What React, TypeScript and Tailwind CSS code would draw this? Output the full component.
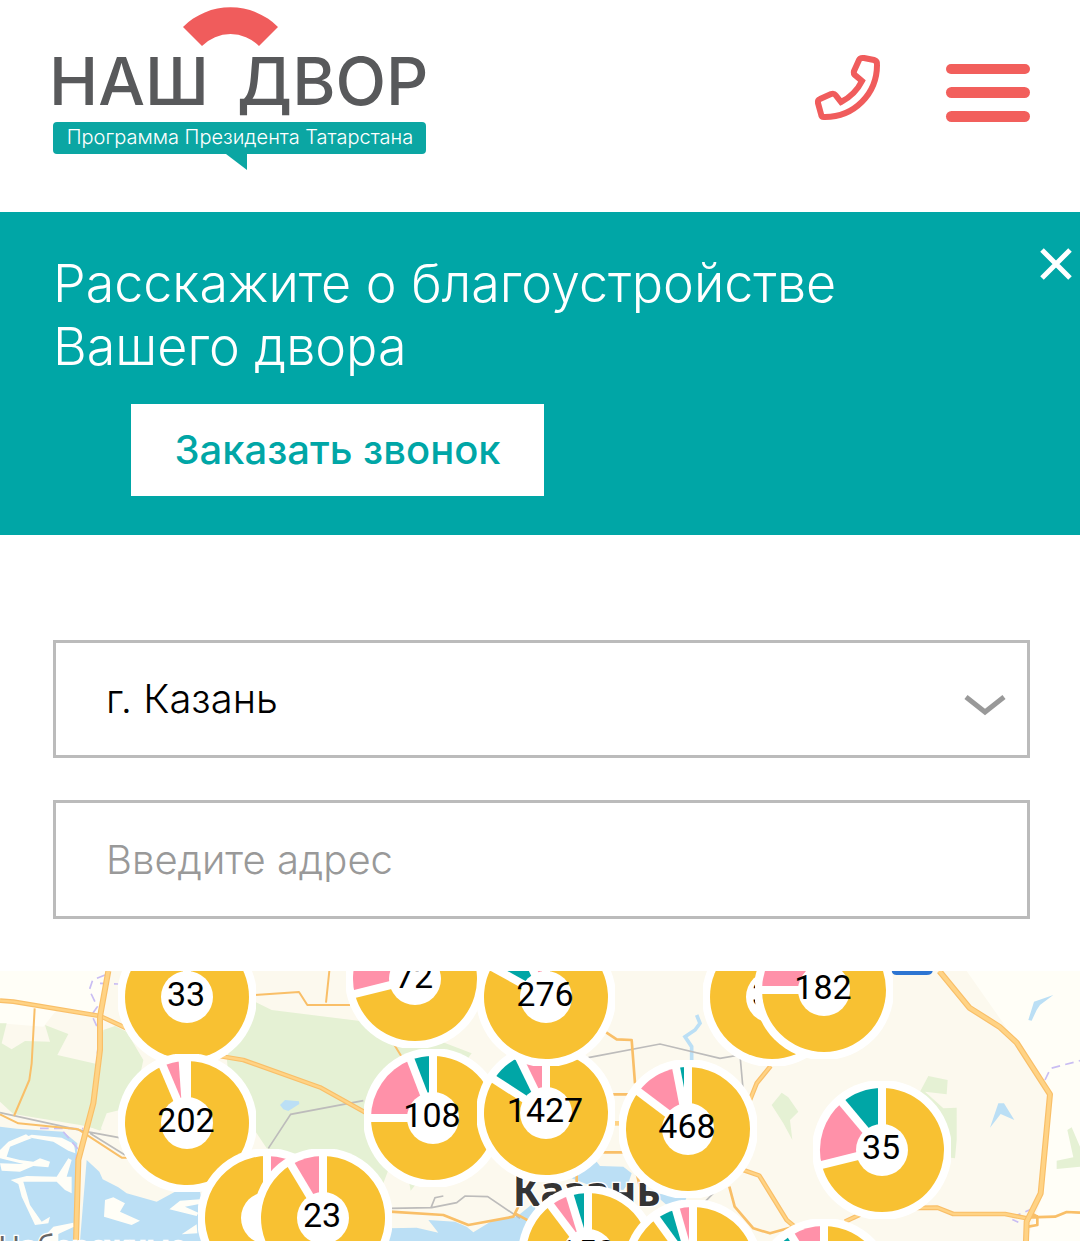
import React, { useState } from 'react';

interface Slice {
  from: number;
  to: number;
  color: string;
}

interface Pin {
  x: number;
  y: number;
  label: string;
  slices: Slice[];
}

const YELLOW = '#f8c132';
const PINK = '#ff91a9';
const TEAL = '#00a6a6';

// angles are clockwise degrees from 12 o'clock, later pins lie on top
const pins: Pin[] = [
  { x: 187, y: 26, label: '33', slices: [{ from: 0, to: 360, color: YELLOW }] },
  { x: 415, y: 8, label: '72', slices: [{ from: 0, to: 256, color: YELLOW }, { from: 256, to: 330, color: PINK }, { from: 330, to: 360, color: TEAL }] },
  { x: 433, y: 147, label: '108', slices: [{ from: 0, to: 270, color: YELLOW }, { from: 270, to: 339, color: PINK }, { from: 339, to: 360, color: TEAL }] },
  { x: 546, y: 142, label: '1427', slices: [{ from: 0, to: 303, color: YELLOW }, { from: 303, to: 334, color: TEAL }, { from: 334, to: 360, color: PINK }] },
  { x: 546, y: 26, label: '276', slices: [{ from: 0, to: 299, color: YELLOW }, { from: 299, to: 334, color: TEAL }, { from: 334, to: 360, color: PINK }] },
  { x: 772, y: 26, label: '33', slices: [{ from: 0, to: 360, color: YELLOW }] },
  { x: 824, y: 19, label: '182', slices: [{ from: 0, to: 270, color: YELLOW }, { from: 270, to: 330, color: PINK }, { from: 330, to: 360, color: TEAL }] },
  { x: 187, y: 152, label: '202', slices: [{ from: 0, to: 337, color: YELLOW }, { from: 337, to: 356, color: PINK }, { from: 356, to: 360, color: TEAL }] },
  { x: 688, y: 158, label: '468', slices: [{ from: 0, to: 307, color: YELLOW }, { from: 307, to: 349, color: PINK }, { from: 349, to: 360, color: TEAL }] },
  { x: 882, y: 179, label: '35', slices: [{ from: 0, to: 256, color: YELLOW }, { from: 256, to: 320, color: PINK }, { from: 320, to: 360, color: TEAL }] },
  { x: 267, y: 247, label: '', slices: [{ from: 0, to: 35, color: PINK }, { from: 35, to: 360, color: YELLOW }] },
  { x: 323, y: 247, label: '23', slices: [{ from: 0, to: 329, color: YELLOW }, { from: 329, to: 360, color: PINK }] },
  { x: 588, y: 284, label: '150', slices: [{ from: 0, to: 323, color: YELLOW }, { from: 323, to: 343, color: PINK }, { from: 343, to: 360, color: TEAL }] },
  { x: 693, y: 298, label: '', slices: [{ from: 0, to: 324, color: YELLOW }, { from: 324, to: 344, color: TEAL }, { from: 344, to: 360, color: PINK }] },
  { x: 824, y: 317, label: '', slices: [{ from: 0, to: 316, color: YELLOW }, { from: 316, to: 328, color: TEAL }, { from: 328, to: 360, color: PINK }] },
];

const point = (angle: number, r: number) => {
  const rad = (angle * Math.PI) / 180;
  return `${(Math.sin(rad) * r).toFixed(2)} ${(-Math.cos(rad) * r).toFixed(2)}`;
};

const Donut: React.FC<{ slices: Slice[] }> = ({ slices }) => (
  <svg viewBox="-69 -69 138 138" className="absolute inset-0 size-full" aria-hidden="true">
    <circle r="70" fill="#fff" />
    {slices.length === 1 ? (
      <circle r="62" fill={slices[0].color} />
    ) : (
      slices.map((s) => (
        <path
          key={s.from}
          fill={s.color}
          d={`M0 0 L${point(s.from, 62)} A62 62 0 ${s.to - s.from > 180 ? 1 : 0} 1 ${point(s.to, 62)} Z`}
        />
      ))
    )}
    {slices.map((s) => (
      <path key={s.from} d={`M0 0 L${point(s.from, 66)}`} stroke="#fff" strokeWidth="8" />
    ))}
    <circle r="26" fill="#fff" />
  </svg>
);

const MapPin: React.FC<{ pin: Pin }> = ({ pin }) => (
  <button
    type="button"
    aria-label={pin.label ? undefined : 'Дворы'}
    className="absolute flex size-[138px] -translate-x-1/2 -translate-y-1/2 items-center justify-center pr-0.5 pb-1.5"
    style={{ left: pin.x, top: pin.y }}
  >
    <Donut slices={pin.slices} />
    <span className="relative font-['Roboto',sans-serif] text-[34px] leading-10 text-black">{pin.label}</span>
  </button>
);

const Road: React.FC<{ d: string; w?: number }> = ({ d, w = 14 }) => (
  <g fill="none" strokeLinejoin="round">
    <path d={d} stroke="#f9bf68" strokeWidth={w} />
    {w > 8 && <path d={d} stroke="#ffd385" strokeWidth={w - 7} />}
  </g>
);

const MapBackground = () => (
  <svg
    viewBox="0 33 3240 810"
    preserveAspectRatio="xMinYMin slice"
    className="absolute inset-0 size-full"
    aria-hidden="true"
  >
    <rect y="33" width="3240" height="810" fill="#fcf9ee" />
    <path d="M0 33 H325 L300 165 L170 150 130 200 0 190 Z M2900 33 H3240 V843 H3080 L3130 700 3155 400 3045 240 Z" fill="#fffef7" />

    {/* woods */}
    <g fill="#e5f1d4">
      <path d="M0 190 L20 190 5 250 35 268 75 243 150 245 135 195 205 222 172 285 290 312 280 430 305 510 240 495 40 462 0 425 Z" />
      <path d="M310 210 L345 198 380 215 430 300 400 440 320 460 300 512 268 500 290 380 Z" />
      <path d="M765 125 L815 150 1080 183 1220 205 1415 280 1400 300 1340 330 1180 420 1130 560 1165 630 1150 670 1110 640 900 600 800 565 690 400 680 290 Z" />
      <path d="M1228 670 L1240 650 1250 670 1232 692 Z" />
      <path d="M2345 398 L2315 435 2350 490 2377 540 2370 480 2395 455 2365 412 Z" />
      <path d="M2785 348 L2843 360 2840 403 2775 395 2830 445 2870 443 2870 540 2865 595 2830 590 2820 470 2760 395 Z" />
      <path d="M3202 510 L3215 502 3240 560 3240 620 3170 627 3170 602 3220 592 Z" />
    </g>

    {/* water */}
    <g fill="#bbdff5">
      <path d="M0 500 L50 506 190 515 232 550 222 843 0 843 Z" />
      <path d="M260 600 L298 635 308 658 355 682 380 700 470 725 525 695 600 692 620 843 240 843 Z" />
      <path d="M840 435 L855 420 897 424 898 432 865 453 850 448 Z" />
      <path d="M1165 805 L1250 803 1315 818 1285 780 1365 785 1400 800 1420 817 1480 780 1550 770 1600 730 1640 843 1130 843 Z" />
      <path d="M1715 655 L1765 625 1790 605 1800 618 1870 620 1895 640 1885 670 1870 690 1780 680 Z" />
      <path d="M1960 700 L2060 710 2050 740 2000 735 Z" />
      <path d="M3085 180 L3102 125 3160 105 3120 135 3110 150 3095 182 Z" />
      <path d="M2970 503 L2995 430 3012 430 3043 480 3002 462 Z" />
    </g>
    <path d="M2090 165 L2100 190 2085 210 2055 230 2075 260 2075 310" fill="none" stroke="#bbdff5" strokeWidth="11" />

    {/* islands and shoals */}
    <g fill="#fffef7">
      <path d="M0 570 L25 545 60 530 78 523 95 535 75 542 30 560 20 590 60 600 100 605 120 595 150 605 145 622 100 618 60 635 5 632 0 610 70 612 0 595 Z" />
      <path d="M80 530 L95 524 185 533 222 552 226 580 205 572 160 545 100 535 Z" />
      <path d="M32 660 L80 648 170 650 205 595 215 600 200 650 215 650 215 700 195 690 170 665 70 665 90 735 125 785 150 770 145 790 105 795 65 710 55 672 Z" />
      <path d="M315 720 L340 712 375 730 360 755 420 782 395 795 312 770 Z" />
      <path d="M508 748 L540 722 600 718 598 732 555 740 595 758 590 768 Z M545 823 L590 793 592 820 Z" />
      <path d="M120 843 L160 800 220 788 222 800 175 822 175 843 Z" />
    </g>

    {/* railways */}
    <g fill="none" stroke="#bdbcbb" strokeWidth="5">
      <path d="M0 458 L260 515 370 535 M270 520 L375 585 M805 565 L872 463 1090 422" />
      <path d="M1765 293 L1980 252 2160 295 2220 285 2232 420 M1170 745 L1295 743 1370 728 1395 708 1463 710 1560 775 M1293 743 L1305 713 1330 708" />
      <path d="M2110 730 L2150 690" />
    </g>

    {/* district borders */}
    <g fill="none" stroke="#c9bdf3" strokeWidth="5" strokeDasharray="26 16">
      <path d="M315 45 L278 60 268 90 292 140 275 165 298 215 280 420 M300 70 L355 72 M120 505 L190 505 250 506 M190 515 L232 565 228 600" />
      <path d="M3135 360 L3152 325 3240 302 M3100 745 L3065 760 3030 775 3055 787" />
    </g>

    {/* minor roads */}
    <Road w={6} d="M104 145 L95 310 88 360 42 468 M0 463 L55 490 235 508 365 593 400 593" />
    <Road w={6} d="M765 105 L897 96 922 135 1050 135 M988 33 L978 128 M1180 250 L1205 290" />
    <Road w={8} d="M1815 215 L1850 238 1895 240 1905 370 M1830 403 L1900 403 M1810 577 L1880 577" />
    <Road w={8} d="M1170 755 L1330 765 1405 795 1540 770 1555 740 M1545 760 L1600 790 M1730 640 L1730 670 M1910 640 L1920 680" />
    <Road w={8} d="M2188 680 L2204 740 2260 805 2310 820 2370 803 2400 795" />
    <Road w={8} d="M3090 772 L3165 770 3200 756 3240 758 M3085 800 L3112 795 3112 770 3095 760" />

    {/* highways */}
    <Road d="M0 122 L40 125 300 168 380 205 M640 285 L730 300 960 382 1100 460" />
    <Road w={18} d="M325 33 L300 170 300 270 280 430 235 600 228 843" />
    <Road d="M2312 318 L2270 370 2250 420 M2230 630 L2278 647 2360 780 2390 805" />
    <Road d="M2535 785 L2620 745 2812 743 2860 762 3015 762 3080 775" />
    <Road w={18} d="M2818 33 L2908 143 2998 200 3050 248 3150 403 3122 700 3080 785 3078 843" />
    <path d="M1835 490 H1860" stroke="#ffd385" strokeWidth="14" />
    <path d="M2675 33 H2798 Q2796 45 2780 45 H2690 Q2677 45 2675 33" fill="#2d75d2" />

    <g fill="#343434" stroke="#fff" strokeWidth="8" paintOrder="stroke" fontFamily="'Noto Sans', sans-serif">
      <text x="1538" y="738" fontSize="122" fontWeight="700">Казань</text>
      <text x="-6" y="894" fontSize="90" fill="#666">Набережные</text>
    </g>
  </svg>
);

const Logo = () => (
  <a href="#" aria-label="Наш двор" className="block w-[376px]">
    <svg viewBox="0 0 376 170" className="block w-full overflow-visible">
      <path d="M130 27 A67 67 0 0 1 225 27 L206 46 A40 40 0 0 0 149 46 Z" fill="#f05c5c" />
      <g fill="#58595b" fontFamily="Inter, sans-serif" fontSize="66" fontWeight="500">
        <text x="-4" y="105">НАШ</text>
        <text x="184" y="105">ДВОР</text>
      </g>
      <path d="M4 122 H369 Q373 122 373 126 V150 Q373 154 369 154 H194 V170 L173 154 H4 Q0 154 0 150 V126 Q0 122 4 122" fill="#0ba6a3" />
      <text x="187" y="144" textAnchor="middle" fill="#fff" fontFamily="Inter, sans-serif" fontSize="20" fontWeight="300">
        Программа Президента Татарстана
      </text>
    </svg>
  </a>
);

const Header = () => (
  <header className="flex h-[212px] items-start justify-between pr-[50px] pl-[53px]">
    <Logo />
    <div className="flex items-start gap-16 pt-[54px]">
      <a href="tel:" aria-label="Позвонить">
        <svg viewBox="0 0 68 68" className="block size-[68px]" fill="none" stroke="#f05c5c" strokeWidth="6">
          <path d="M50 4 L60 6 Q63.5 7 63 11 C63 40 40 63 11 63 Q7.500 63.5 7 60 L4 49 Q3.500 46 6 45 L17 40 Q20 39 21.500 41 L27 48 Q41 41 48 27 L42 22 Q39 20 40 17 L45 6 Q46 3.500 50 4 Z" />
        </svg>
      </a>
      <button type="button" aria-label="Меню" className="mt-[10px] flex w-[84px] flex-col gap-[13px]">
        <span className="h-[10px] w-full rounded-full bg-[#f25f5c]" />
        <span className="h-[11px] w-full rounded-full bg-[#f25f5c]" />
        <span className="h-[11px] w-full rounded-full bg-[#f25f5c]" />
      </button>
    </div>
  </header>
);

const Banner: React.FC<{ onClose: () => void }> = ({ onClose }) => (
  <section className="relative bg-[#00a6a6] pt-10 pr-[200px] pb-[39px] pl-[53px] text-white">
    <h1 className="text-[52px] leading-[63px] font-light">Расскажите о благоустройстве Вашего двора</h1>
    <button
      type="button"
      className="mt-[26px] ml-[78px] block h-[92px] w-[413px] bg-white text-[40px] font-medium text-[#00a6a6]"
    >
      Заказать звонок
    </button>
    <button type="button" aria-label="Закрыть" onClick={onClose} className="absolute top-9 right-2">
      <svg viewBox="0 0 32 32" className="block size-8" stroke="#fff" strokeWidth="5">
        <path d="M2 2 L30 30 M30 2 L2 30" />
      </svg>
    </button>
  </section>
);

export default function App() {
  const [bannerOpen, setBannerOpen] = useState(true);
  const [address, setAddress] = useState('');

  return (
    <div className="bg-white font-['Inter','Noto_Sans',sans-serif]">
      <Header />
      {bannerOpen && <Banner onClose={() => setBannerOpen(false)} />}
      <form className="flex flex-col gap-[42px] pt-[105px] pr-[50px] pb-[52px] pl-[53px]">
        <div className="relative">
          <select
            aria-label="Город"
            className="block h-[118px] w-full appearance-none border-3 border-[#bbb] bg-white px-[50px] text-[40px] font-light text-black"
          >
            <option>г. Казань</option>
          </select>
          <svg
            viewBox="0 0 42 22"
            className="pointer-events-none absolute top-[54px] right-6 h-[22px] w-[42px]"
            fill="none"
            stroke="#999"
            strokeWidth="5"
          >
            <path d="M2 3 L21 18 L40 3" />
          </svg>
        </div>
        <input
          type="text"
          aria-label="Адрес"
          placeholder="Введите адрес"
          value={address}
          onChange={(e) => setAddress(e.target.value)}
          className="block h-[119px] w-full border-3 border-[#bbb] bg-white px-[50px] text-[40px] font-light text-black placeholder:text-[#999]"
        />
      </form>
      <section className="relative h-[270px] overflow-hidden" aria-label="Карта">
        <MapBackground />
        {pins.map((pin) => (
          <MapPin key={`${pin.x}-${pin.y}`} pin={pin} />
        ))}
      </section>
    </div>
  );
}
